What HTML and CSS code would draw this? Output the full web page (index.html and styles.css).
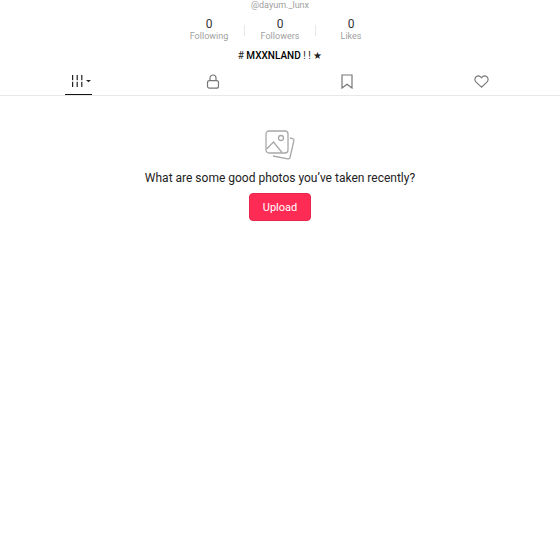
FILE: index.html
```html
<!DOCTYPE html>
<html lang="en">
<head>
    <meta charset="UTF-8">
    <meta name="viewport" content="width=device-width, initial-scale=1.0">
    <title>Profile</title>
    <link rel="stylesheet" href="styles.css">
</head>
<body>
<div class="handle">@dayum._lunx</div>

<div class="stats">
    <div class="stat"><span class="stat-num">0</span><span class="stat-label">Following</span></div>
    <div class="stat-line"></div>
    <div class="stat"><span class="stat-num">0</span><span class="stat-label">Followers</span></div>
    <div class="stat-line"></div>
    <div class="stat"><span class="stat-num">0</span><span class="stat-label">Likes</span></div>
</div>

<div class="bio"># <b>MXXNLAND</b> ! ! ★</div>

<div class="tabs">
    <div class="tab tab-active">
        <svg class="grid-icon" width="20" height="14" viewBox="0 0 20 14" fill="#222">
            <rect x="1" y="1" width="1.2" height="5.2"/><rect x="1" y="7.8" width="1.2" height="5.2"/>
            <rect x="5.6" y="1" width="1.2" height="5.2"/><rect x="5.6" y="7.8" width="1.2" height="5.2"/>
            <rect x="10.2" y="1" width="1.2" height="5.2"/><rect x="10.2" y="7.8" width="1.2" height="5.2"/>
            <path d="M15 6h5l-2.5 2.2z"/>
        </svg>
    </div>
    <div class="tab">
        <svg width="14" height="15" viewBox="0 0 14 15" fill="none" stroke="#777" stroke-width="1.2">
            <rect x="1.5" y="6.6" width="11" height="7.6" rx="2"/>
            <path d="M4 6.6V4a3 3 0 0 1 6 0v2.6"/>
        </svg>
    </div>
    <div class="tab">
        <svg width="12" height="15" viewBox="0 0 12 15" fill="none" stroke="#777" stroke-width="1.2">
            <path d="M1 1h10v13L6 10.2 1 14z"/>
        </svg>
    </div>
    <div class="tab">
        <svg width="15" height="15" viewBox="0 0 16 14" fill="none" stroke="#777" stroke-width="1.2">
            <path d="M8 13 2.2 7.6C.4 5.8.6 3.2 2.3 1.9 4.1.6 6.5 1 8 3c1.500-2 3.900-2.400 5.700-1.100 1.700 1.300 1.900 3.900.1 5.700z"/>
        </svg>
    </div>
</div>

<div class="empty">
    <svg width="30" height="31" viewBox="0 0 30 31" fill="none" stroke="#a8a8a8" stroke-width="1.3">
        <rect x="1" y="1" width="22" height="22" rx="3"/>
        <circle cx="16" cy="8" r="2.5"/>
        <path d="M1.5 19 8.5 12 17 22.5"/>
        <path d="M25 8l2.500.7c1 .3 1.600 1.300 1.300 2.300l-3.800 16.500c-.3 1-1.300 1.600-2.300 1.300L8 26"/>
    </svg>
    <div class="empty-text">What are some good photos you’ve taken recently?</div>
    <button class="upload-btn">Upload</button>
</div>
</body>
</html>
```

FILE: styles.css
```css
body {
    margin: 0;
    background: #fff;
    font-family: Roboto, "Liberation Sans", sans-serif;
    color: #222;
    overflow: hidden;
}

.handle {
    height: 11px;
    line-height: 10px;
    text-align: center;
    font-size: 9px;
    color: #a0a0a0;
}

.stats {
    display: flex;
    justify-content: center;
    align-items: center;
    margin-top: 7px;
}

.stat {
    width: 70px;
    display: flex;
    flex-direction: column;
    align-items: center;
}

.stat-num {
    font-size: 12px;
    line-height: 12px;
    color: #333;
}

.stat-label {
    font-size: 9px;
    line-height: 12px;
    color: #a0a0a0;
}

.stat-line {
    width: 1px;
    height: 11px;
    background: #e8e8e8;
}

.bio {
    margin-top: 7px;
    height: 13px;
    line-height: 13px;
    text-align: center;
    font-size: 10px;
    color: #222;
}

.bio b {
    font-weight: 500;
    color: #000;
}

.tabs {
    display: flex;
    margin-top: 6px;
    height: 27px;
    padding: 0 12px 0 12px;
    border-bottom: 1px solid #e8e8e8;
}

.tab {
    width: 134px;
    display: flex;
    justify-content: center;
    align-items: flex-start;
    padding-top: 6px;
    box-sizing: border-box;
    height: 27px;
}

.grid-icon {
    margin-left: 3px;
}

.tab-active {
    position: relative;
}

.tab-active::after {
    content: "";
    position: absolute;
    left: 53px;
    bottom: 0;
    width: 27px;
    height: 1.5px;
    background: #111;
}

.empty {
    display: flex;
    flex-direction: column;
    align-items: center;
    padding-top: 34px;
}

.empty-text {
    margin-top: 10px;
    font-size: 12px;
    line-height: 15px;
    color: #222;
}

.upload-btn {
    margin-top: 7px;
    width: 62px;
    height: 28px;
    border: 1px solid #e8264e;
    border-radius: 4px;
    background: #fe2c55;
    color: #fff;
    font-family: inherit;
    font-size: 11px;
}
```
